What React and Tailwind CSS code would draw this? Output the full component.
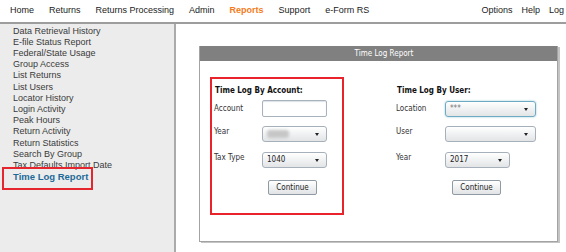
import React from "react";

const navFont = { fontFamily: '"Liberation Sans", Arial, sans-serif' };
const formFont = { fontFamily: '"DejaVu Sans Condensed", "DejaVu Sans", Verdana, sans-serif' };

function Arrow() {
  return <span className="block h-0 w-0 border-x-[2.5px] border-t-[3px] border-x-transparent border-t-[#222]" />;
}

function Select({ w, children, focus }) {
  return (
    <div
      className={
        "flex h-[16px] items-center justify-between rounded-[3px] border bg-gradient-to-b from-white to-[#e2e4e6] pl-[4px] pr-[7px] text-[8px] text-[#222] " +
        (focus ? "border-[#6eaac2] shadow-[0_0_2px_#8cc0d4]" : "border-[#a6b0ba]")
      }
      style={{ width: w }}
    >
      <span className="leading-[10px]">{children}</span>
      <Arrow />
    </div>
  );
}

function Button() {
  return (
    <div className="flex h-[15px] w-[49px] items-center justify-center rounded-[2px] border border-[#8f9aa5] bg-gradient-to-b from-white to-[#e1e3e5] text-[8px] leading-[10px] text-[#222]">
      Continue
    </div>
  );
}

const sideItems = [
  "Data Retrieval History",
  "E-file Status Report",
  "Federal/State Usage",
  "Group Access",
  "List Returns",
  "List Users",
  "Locator History",
  "Login Activity",
  "Peak Hours",
  "Return Activity",
  "Return Statistics",
  "Search By Group",
  "Tax Defaults Import Date",
];

export default function App() {
  return (
    <div className="h-[252px] w-[566px] overflow-hidden bg-white">
      <div className="flex h-[24px] items-center border-b-2 border-[#9d9d9d] text-[9px] text-[#222]" style={navFont}>
        <div className="flex gap-[15px] pl-[10px]">
          <span>Home</span>
          <span>Returns</span>
          <span>Returns Processing</span>
          <span>Admin</span>
          <span className="font-bold text-[#f47b20]">Reports</span>
          <span>Support</span>
          <span>e-Form RS</span>
        </div>
        <div className="ml-auto flex gap-[9px] pr-[2px]">
          <span>Options</span>
          <span>Help</span>
          <span>Log</span>
        </div>
      </div>
      <div className="flex h-[228px]">
        <div className="relative w-[176px] shrink-0 border-r-2 border-[#ababab] bg-[#ececec] pl-[13px] pt-[1.5px] text-[9px] leading-[11.2px] text-[#3a3a3a]" style={navFont}>
          {sideItems.map((s) => (
            <div key={s}>{s}</div>
          ))}
          <div className="text-[9.5px] font-bold text-[#1d6a99]">Time Log Report</div>
          <div className="absolute left-[2px] top-[143px] h-[23px] w-[91px] border-2 border-[#e5262e]" />
        </div>
        <div className="flex-1 bg-white pl-[23px] pt-[22px]" style={formFont}>
          <div className="h-[196px] w-[359px] border-x border-b border-[#a3a3a3] shadow-[2px_1px_0_#c4c4c4]">
            <div className="flex h-[15px] items-center justify-center bg-[#808080] pl-[11px] text-[8px] text-white">
              Time Log Report
            </div>
            <div className="flex pl-[10px] pt-[16px] text-[8px] text-[#333]">
              <div className="flex h-[138px] w-[134px] flex-col border-2 border-[#e8232b] pl-[2px] pt-[7px]">
                <div className="h-[10px] pl-[1px] font-bold leading-[10px] text-[#111]">Time Log By Account:</div>
                <div className="mt-[4px] flex h-[17px] items-center">
                  <span className="w-[48px] leading-[10px]">Account</span>
                  <div className="h-[17px] w-[65px] rounded-[2px] border border-[#a8b2bc] bg-white shadow-[inset_0_1px_1px_#dde2e6]" />
                </div>
                <div className="mt-[9px] flex h-[16px] items-start">
                  <span className="w-[48px] pt-[1px] leading-[10px]">Year</span>
                  <Select w="65px">
                    <span className="block h-[8px] w-[22px] rounded-[3px] bg-[#c6c6c6] blur-[1.5px]" />
                  </Select>
                </div>
                <div className="mt-[10px] flex h-[16px] items-start">
                  <span className="w-[48px] pt-[1px] leading-[10px]">Tax Type</span>
                  <Select w="65px">1040</Select>
                </div>
                <div className="mt-[12px] pl-[54px]">
                  <Button />
                </div>
              </div>
              <div className="ml-[52px] flex flex-col pt-[9px]">
                <div className="h-[10px] pl-[1px] font-bold leading-[10px] text-[#111]">Time Log By User:</div>
                <div className="mt-[4px] flex h-[17px] items-end">
                  <span className="mb-[3px] w-[49px] leading-[10px]">Location</span>
                  <Select w="91px" focus>
                    <span className="text-[#777]">***</span>
                  </Select>
                </div>
                <div className="mt-[9px] flex h-[16px] items-start">
                  <span className="w-[49px] pt-[1px] leading-[10px]">User</span>
                  <Select w="91px">
                    <span />
                  </Select>
                </div>
                <div className="mt-[10px] flex h-[16px] items-start">
                  <span className="w-[49px] pt-[1px] leading-[10px]">Year</span>
                  <Select w="65px">2017</Select>
                </div>
                <div className="mt-[12px] pl-[56px]">
                  <Button />
                </div>
              </div>
            </div>
          </div>
        </div>
      </div>
    </div>
  );
}
